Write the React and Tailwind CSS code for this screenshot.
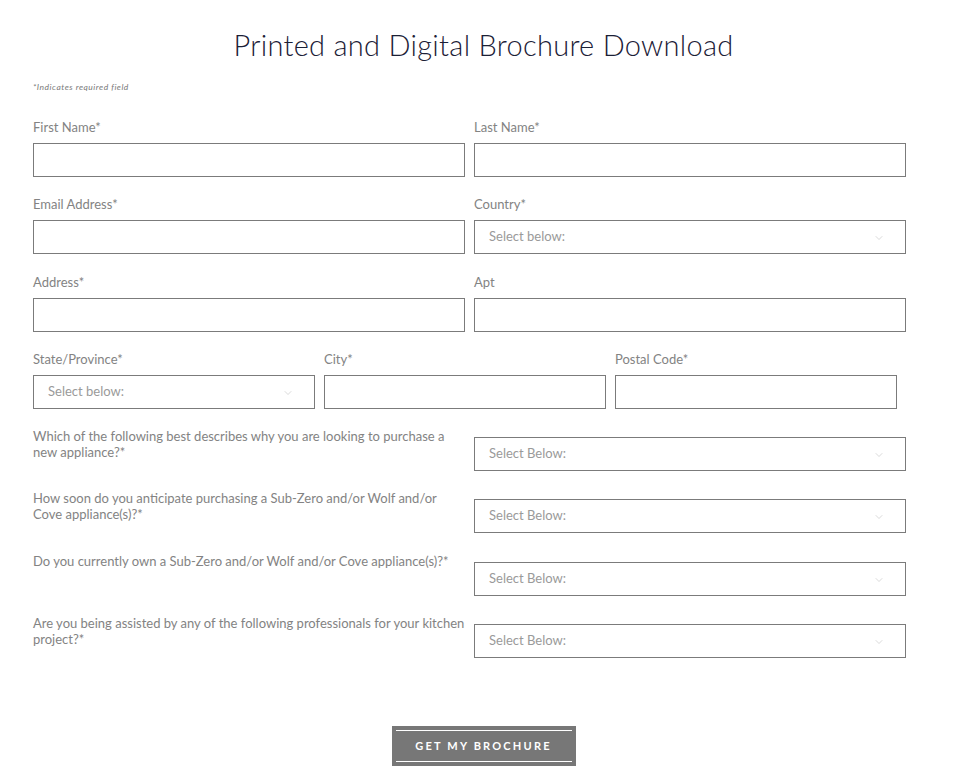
import { ChevronDown } from 'lucide-react';

const font = { fontFamily: 'Lato, "Open Sans", sans-serif' };

function Label({ children }) {
  return <label className="block text-[13px] leading-4 text-[#838383] mb-[8px]">{children}</label>;
}

function TextInput() {
  return <input type="text" className="block w-full h-[34px] border border-[#7b7b7b] bg-white outline-none" />;
}

function SelectBox({ placeholder }) {
  return (
    <div className="relative w-full h-[34px] border border-[#7b7b7b] bg-white flex items-center pl-[14px]">
      <span className="text-[13px] text-[#9a9a9a]">{placeholder}</span>
      <ChevronDown size={12} strokeWidth={1} className="absolute right-[20px] top-[11px] text-[#b5b5b5]" />
    </div>
  );
}

function Field({ label, children, className = '' }) {
  return (
    <div className={className}>
      <Label>{label}</Label>
      {children}
    </div>
  );
}

const questions = [
  { text: 'Which of the following best describes why you are looking to purchase a new appliance?*', mt: 'mt-[19px]' },
  { text: 'How soon do you anticipate purchasing a Sub-Zero and/or Wolf and/or Cove appliance(s)?*', mt: 'mt-[19px]' },
  { text: 'Do you currently own a Sub-Zero and/or Wolf and/or Cove appliance(s)?*', mt: 'mt-[20px]' },
  { text: 'Are you being assisted by any of the following professionals for your kitchen project?*', mt: 'mt-[19px]' },
];

export default function App() {
  return (
    <div className="min-h-screen bg-white" style={font}>
      <h1 className="pt-[27px] text-center text-[29px] font-light leading-9 tracking-[0.01em] text-[#1b2036]">
        Printed and Digital Brochure Download
      </h1>
      <div className="w-[873px] ml-[33px]">
        <p className="mt-[18px] text-[8.5px] italic tracking-[0.06em] text-[#7a7a7a]">*Indicates required field</p>

        <div className="mt-[25px] flex gap-[9px]">
          <Field label="First Name*" className="w-[432px]"><TextInput /></Field>
          <Field label="Last Name*" className="w-[432px]"><TextInput /></Field>
        </div>

        <div className="mt-[19px] flex gap-[9px]">
          <Field label="Email Address*" className="w-[432px]"><TextInput /></Field>
          <Field label="Country*" className="w-[432px]"><SelectBox placeholder="Select below:" /></Field>
        </div>

        <div className="mt-[20px] flex gap-[9px]">
          <Field label="Address*" className="w-[432px]"><TextInput /></Field>
          <Field label="Apt" className="w-[432px]"><TextInput /></Field>
        </div>

        <div className="mt-[19px] flex gap-[9px]">
          <Field label="State/Province*" className="w-[282px]"><SelectBox placeholder="Select below:" /></Field>
          <Field label="City*" className="w-[282px]"><TextInput /></Field>
          <Field label="Postal Code*" className="w-[282px]"><TextInput /></Field>
        </div>

        {questions.map((q) => (
          <div key={q.text} className={`${q.mt} flex gap-[9px]`}>
            <p className="w-[432px] text-[13px] leading-4 text-[#838383]">{q.text}</p>
            <div className="w-[432px] pt-[9px]">
              <SelectBox placeholder="Select Below:" />
            </div>
          </div>
        ))}
      </div>

      <div className="mt-[68px] flex justify-center">
        <button className="w-[184px] h-[40px] bg-[#777777] px-[4px] py-[4px]">
          <span className="flex h-full items-center justify-center border-y border-white text-[11px] font-bold tracking-[0.2em] text-white">
            GET MY BROCHURE
          </span>
        </button>
      </div>
    </div>
  );
}
